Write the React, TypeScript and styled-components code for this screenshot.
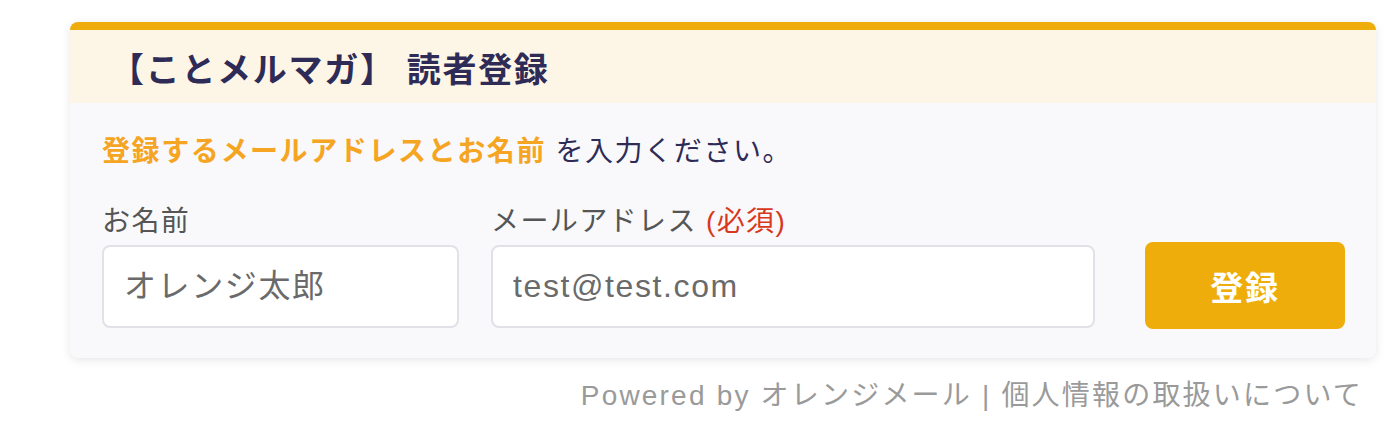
import React from "react";
import styled, { createGlobalStyle } from "styled-components";

const Global = createGlobalStyle`
  html, body { margin: 0; padding: 0; background: #ffffff; }
  body {
    font-family: "Liberation Sans", "Noto Sans CJK JP", sans-serif;
    letter-spacing: 0.05em;
  }
  * { box-sizing: border-box; }
`;

const Page = styled.div`
  padding: 22px 21px 0 70px;
`;

const Card = styled.section`
  width: 1306px;
  border-top: 8px solid #eead0b;
  border-radius: 8px;
  background: #f9f9fb;
  box-shadow: 0 2px 10px rgba(0, 0, 0, 0.1);
  overflow: hidden;
`;

const Header = styled.header`
  height: 73px;
  display: flex;
  align-items: center;
  padding: 7px 32px 0 40px;
  background: #fdf5e6;
`;

const Title = styled.h1`
  margin: 0;
  font-size: 34px;
  font-weight: 700;
  line-height: 1;
  letter-spacing: 0.05em;
  color: #2e2c57;
`;

const Body = styled.div`
  padding: 28px 31px 30px 32px;
`;

const Lead = styled.p`
  margin: 0;
  font-size: 28px;
  line-height: 42px;
  letter-spacing: 1.6px;
  color: #2e2c57;
`;

const Accent = styled.strong`
  font-weight: 700;
  color: #f5a522;
`;

const Row = styled.div`
  margin-top: 28px;
  display: flex;
  align-items: flex-end;
`;

const Field = styled.label<{ $w: number; $mr: number }>`
  width: ${(p) => p.$w}px;
  margin-right: ${(p) => p.$mr}px;
  display: flex;
  flex-direction: column;
  gap: 2px;
`;

const LabelText = styled.span`
  font-size: 28px;
  line-height: 42px;
  letter-spacing: 1.4px;
  color: #555555;
`;

const Required = styled.span`
  color: #d8381c;
`;

const Input = styled.input`
  width: 100%;
  height: 83px;
  padding: 0 20px;
  border: 2px solid #e1e1e7;
  border-radius: 8px;
  background: #ffffff;
  font-family: "Liberation Sans", "Noto Sans CJK JP", sans-serif;
  font-size: 32px;
  letter-spacing: 0.05em;
  color: #666666;
  outline: none;
  &::placeholder {
    color: #6a6a6a;
    opacity: 1;
  }
`;

const Submit = styled.button`
  width: 200px;
  height: 87px;
  margin-bottom: -1px;
  border: none;
  border-radius: 8px;
  background: #eead0b;
  color: #ffffff;
  font-family: "Liberation Sans", "Noto Sans CJK JP", sans-serif;
  font-size: 33px;
  font-weight: 700;
  letter-spacing: 0.05em;
  cursor: pointer;
`;

const Footer = styled.footer`
  width: 1306px;
  padding: 18px 13px 0 0;
  text-align: right;
  font-size: 28px;
  line-height: 40px;
  letter-spacing: 2.2px;
  color: #9a9a9a;
`;

export default function App() {
  return (
    <>
      <Global />
      <Page>
        <Card>
          <Header>
            <Title>【ことメルマガ】 読者登録</Title>
          </Header>
          <Body>
            <Lead>
              <Accent>登録するメールアドレスとお名前</Accent> を入力ください。
            </Lead>
            <Row>
              <Field $w={357} $mr={32}>
                <LabelText>お名前</LabelText>
                <Input placeholder="オレンジ太郎" />
              </Field>
              <Field $w={604} $mr={50}>
                <LabelText>
                  メールアドレス <Required>(必須)</Required>
                </LabelText>
                <Input placeholder="test@test.com" />
              </Field>
              <Submit type="button">登録</Submit>
            </Row>
          </Body>
        </Card>
        <Footer>Powered by オレンジメール | 個人情報の取扱いについて</Footer>
      </Page>
    </>
  );
}
